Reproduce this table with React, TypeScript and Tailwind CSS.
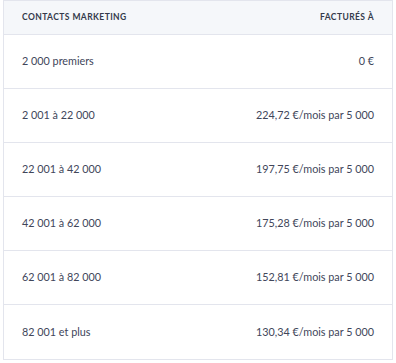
const tiers = [
  { range: "2 000 premiers", price: "0 €" },
  { range: "2 001 à 22 000", price: "224,72 €/mois par 5 000" },
  { range: "22 001 à 42 000", price: "197,75 €/mois par 5 000" },
  { range: "42 001 à 62 000", price: "175,28 €/mois par 5 000" },
  { range: "62 001 à 82 000", price: "152,81 €/mois par 5 000" },
  { range: "82 001 et plus", price: "130,34 €/mois par 5 000" },
];

export default function App() {
  return (
    <div className="bg-white w-[396px] h-[363px] pl-[3px] font-['Lato',sans-serif]">
      <div className="w-[390px] border border-[#e3e5ed]">
        <div className="flex items-center justify-between h-[34px] bg-[#f5f7fa] border-b border-[#e3e5ed] px-[18px] text-[8.5px] font-bold tracking-[0.05em] text-[#343a4b] uppercase">
          <span>Contacts marketing</span>
          <span>Facturés à</span>
        </div>
        {tiers.map((t, i) => (
          <div
            key={i}
            className={`flex items-center justify-between h-[54px] px-[18px] text-[10.8px] text-[#41465a] ${
              i < tiers.length - 1 ? "border-b border-[#e3e5ed]" : ""
            }`}
          >
            <span>{t.range}</span>
            <span>{t.price}</span>
          </div>
        ))}
      </div>
    </div>
  );
}
